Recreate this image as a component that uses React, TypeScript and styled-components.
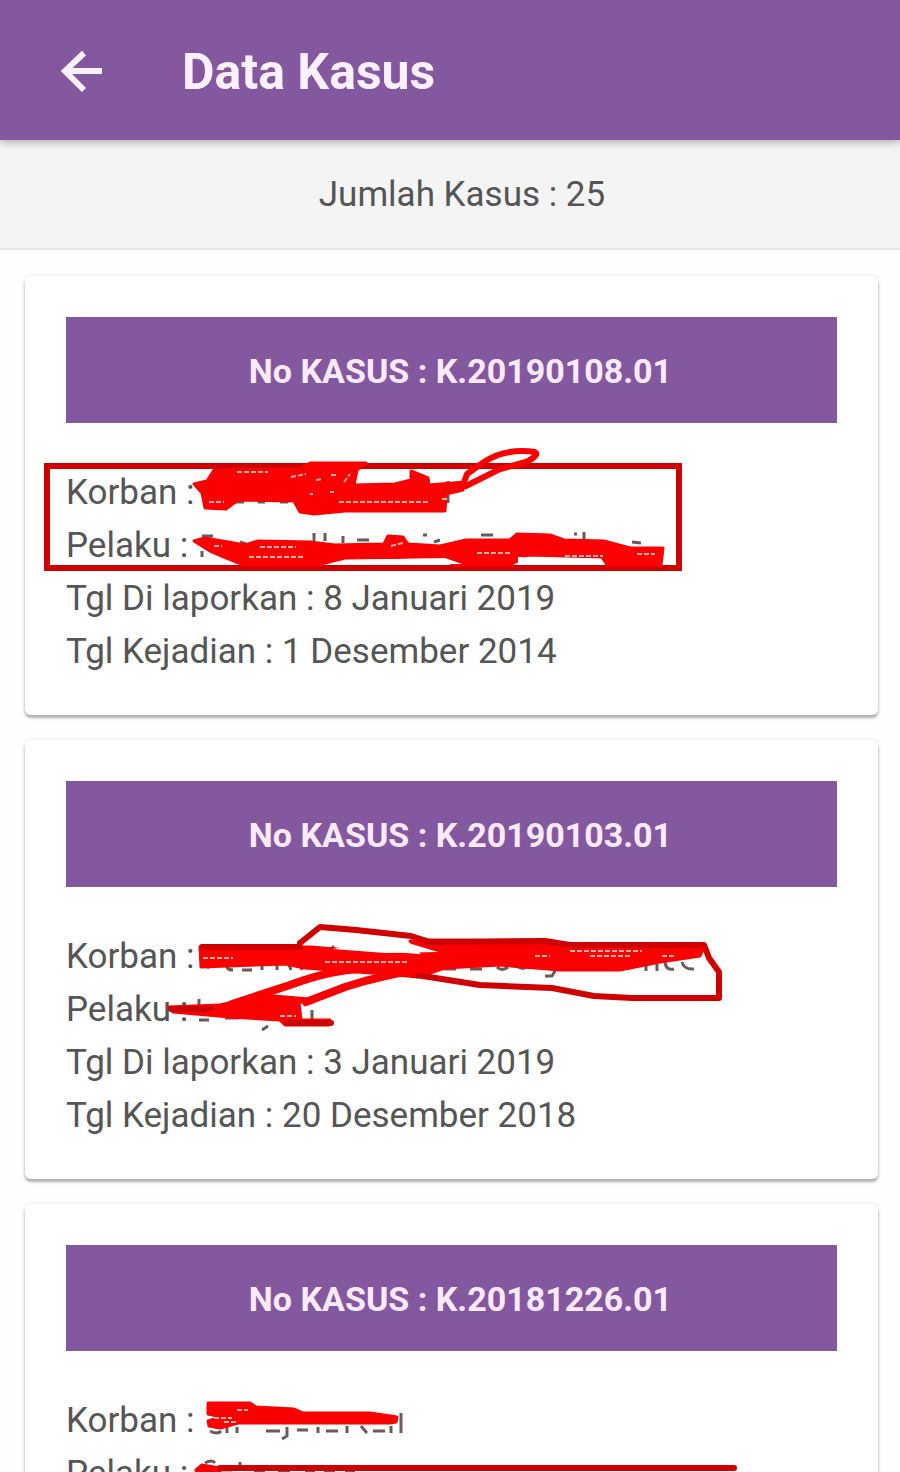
import React from "react";
import styled, { createGlobalStyle } from "styled-components";

const PURPLE = "#84589f";

const GlobalStyle = createGlobalStyle`
  *, *::before, *::after { box-sizing: border-box; }
  body { margin: 0; background: #fff; font-family: Roboto, "Liberation Sans", sans-serif; }
`;

const Screen = styled.div`
  display: flex;
  flex-direction: column;
  height: 100vh;
  overflow: hidden;
  background: #fefefe;
  color: #555;
`;

const AppBar = styled.header`
  position: relative;
  z-index: 1;
  display: flex;
  align-items: center;
  gap: 70px;
  flex: none;
  height: 140px;
  padding: 4px 52px 0;
  background: ${PURPLE};
  color: #fff0ff;
  box-shadow: 0 2px 8px rgba(0, 0, 0, 0.3);
`;

const BackButton = styled.button`
  display: flex;
  width: 60px;
  height: 60px;
  padding: 0;
  border: 0;
  background: none;
  color: inherit;
`;

const Title = styled.h1`
  margin: 0;
  font-size: 50px;
  line-height: 60px;
  font-weight: 700;
`;

const Summary = styled.p`
  flex: none;
  margin: 0;
  padding: 29px 0 27px 24px;
  background: #f4f4f4;
  border-bottom: 2px solid #e6e6e6;
  font-size: 35px;
  line-height: 52px;
  text-align: center;
`;

const CaseList = styled.main`
  display: flex;
  flex: 1;
  flex-direction: column;
  gap: 25px;
  min-height: 0;
  padding: 26px 22px 0 25px;
  overflow-y: auto;
  scrollbar-width: none;
`;

const Card = styled.article`
  flex: none;
  padding: 41px 41px 37px;
  border-radius: 6px;
  background: #fff;
  box-shadow: 0 3px 3px rgba(0, 0, 0, 0.3), 0 0 5px rgba(0, 0, 0, 0.1);
`;

const CaseNumber = styled.h2`
  margin: 0 0 43px;
  padding: 28px 0 26px 18px;
  background: ${PURPLE};
  color: #fdeaff;
  font-size: 34px;
  line-height: 52px;
  font-weight: 700;
  text-align: center;
`;

const Details = styled.div`
  position: relative;
`;

const Line = styled.p`
  margin: 0;
  font-size: 35px;
  line-height: 53px;
  white-space: nowrap;
`;

const Markup = styled.svg`
  position: absolute;
  top: 0;
  left: 0;
  overflow: visible;
  pointer-events: none;
  fill: none;
  stroke: #fb0000;
  stroke-width: 6;
  stroke-linecap: round;
  stroke-linejoin: round;

  .solid { fill: #fb0000; stroke-width: 3; }
  .dark { stroke: #cf0000; }
  .gap { stroke: #ffb0a8; stroke-width: 2; stroke-linecap: butt; stroke-dasharray: 5 2; }
  .clear { fill: #fff; stroke: none; }
  .ink { stroke: #6a5a5a; stroke-width: 3; stroke-linecap: butt; }
`;

/* Hand-drawn redactions; coordinates are relative to the details block. */
const FirstMarks = () => (
  <Markup width="771" height="212" viewBox="66 465 771 212" aria-hidden="true">
    <path className="ink" d="M202 535h11M202 550v6M240 541l6 2M314 532v8M325 532v8M343 535v7M357 539h12M423 534h4M434 541l6-2M481 534h12M574 533h3M584 531v7M632 541l9 1M448 480v22M234 501h10M258 501h7M280 501h8" />
    <path className="dark" strokeLinejoin="miter" d="M47 465H679V567H47Z" />
    <path className="solid" d="M194 483L207 480L214 469L300 468L310 462L366 462L357 469L354 484L395 483L411 479L411 470L428 477L429 484L465 481L463 489L446 493L445 510L345 510L314 513L300 511L294 500L238 499L226 508L205 507L202 492Z" />
    <path d="M463 484L467 473L484 461Q505 447 535 451Q540 454 526 461L500 468L466 485" />
    <path className="gap" d="M237 471h31M291 476l15-3M316 479l6-1M331 474h6M344 481l6-8M209 501h15M339 501h90M442 498h6M310 493h3M330 491h4" />
    <path className="solid" d="M194 540L205 537L245 544L258 540L310 541L335 544L384 543L388 535L403 536L408 543L440 545L466 539L510 539L517 533L550 534L564 539L604 540L630 547H663L661 564H607L602 556L529 554L510 564H456L435 556L345 557L317 564H244L224 556L210 550Z" />
    <path className="gap" d="M260 546h36M249 556h56M214 545h8M391 545l12-3M477 552h34M565 555h38M637 553h18" />
    <path className="clear" d="M350 559L445 557L462 563H345ZM518 556L600 558L605 563H518Z" />
  </Markup>
);

const SecondMarks = () => (
  <Markup width="771" height="212" viewBox="66 929 771 212" aria-hidden="true">
    <path className="ink" d="M207 967l6-4M227 961q-2 8 6 8M242 969h10M262 961v8M277 961v8M288 961l3 8M299 961l3 8M420 968h10M444 968h12M470 968h12M497 966q5 5 11 0M517 965q6 5 11 0M548 966q6 5 9-3M558 965l-6 10h-7M332 945l3 3M646 957v13M657 960v10M665 961q1 9 9 7M682 961q2 8 12 7M199 1019h10M199 998v6M225 1017h14M268 1025l-6 4M312 1009v11" />
    <path className="solid" d="M200 946H310L425 955L410 940L430 939L545 940L570 944H705L700 955L660 961L620 969L560 969L500 964L445 967L418 976L385 973L305 967L285 963L201 966Z" />
    <path className="dark" d="M300 942L310 934L320 926L356 929L411 935L430 941L545 940L570 944H704L709 957L719 971V997H632L594 995L552 987L480 984L410 973" />
    <path strokeWidth="8" d="M232 1003L290 984Q345 963 390 969M306 1001L345 986Q385 973 434 966M310 961L410 972" />
    <path className="clear" d="M333 948L375 940L405 941L438 951L385 952Z" />
    <path className="solid" d="M169 1006L220 1004L262 994L309 998L299 1002L301 1019H330L329 1024H285L280 1019L230 1016L173 1011Z" />
    <path className="dark" d="M202 946H300M171 1008H210M287 1022H331" />
    <path className="gap" d="M203 957h30M325 961h82M535 955h15M570 950h72M590 955h40M662 955h14M280 1015h16" />
  </Markup>
);

const ThirdMarks = () => (
  <Markup width="771" height="212" viewBox="66 1393 771 212" aria-hidden="true">
    <path className="ink" d="M210 1430q8 4 11 0M227 1426v6M237 1426v6M266 1430h14M287 1426v9l-5 3M297 1429h11M318 1426v6M326 1430h12M347 1425v7M361 1425l6 7M373 1430h12M391 1425v7M401 1412v20M205 1462q7-4 10 0M221 1469h11M240 1461v8M254 1471h11M278 1471h12M305 1471h10M324 1471h11M345 1471h10" />
    <path className="solid" d="M208 1402H250L256 1406L294 1408L303 1412H370L397 1416L396 1421L390 1422H238L220 1427L209 1425L208 1420L222 1416L208 1413Z" />
    <path className="gap" d="M214 1417h18M237 1409h11M224 1421h12" />
    <path className="solid" d="M196 1469L202 1464L220 1467L219 1476H198Z" />
    <path className="dark" d="M220 1467H734" />
  </Markup>
);

interface CaseRecord {
  id: string;
  reported: string;
  occurred: string;
  Marks: React.ComponentType;
}

const cases: CaseRecord[] = [
  { id: "K.20190108.01", reported: "8 Januari 2019", occurred: "1 Desember 2014", Marks: FirstMarks },
  { id: "K.20190103.01", reported: "3 Januari 2019", occurred: "20 Desember 2018", Marks: SecondMarks },
  { id: "K.20181226.01", reported: "", occurred: "", Marks: ThirdMarks },
];

export default function App() {
  return (
    <>
      <GlobalStyle />
      <Screen>
        <AppBar>
          <BackButton type="button" aria-label="Kembali">
            <svg width="60" height="60" viewBox="0 0 60 60" fill="none" stroke="currentColor" strokeWidth="6">
              <path d="M50 29H13M32 11L13 29L32 48" />
            </svg>
          </BackButton>
          <Title>Data Kasus</Title>
        </AppBar>
        <Summary>Jumlah Kasus : 25</Summary>
        <CaseList>
          {cases.map(({ id, reported, occurred, Marks }) => (
            <Card key={id}>
              <CaseNumber>No KASUS : {id}</CaseNumber>
              <Details>
                <Line>Korban :</Line>
                <Line>Pelaku :</Line>
                {reported && <Line>Tgl Di laporkan : {reported}</Line>}
                {occurred && <Line>Tgl Kejadian : {occurred}</Line>}
                <Marks />
              </Details>
            </Card>
          ))}
        </CaseList>
      </Screen>
    </>
  );
}
